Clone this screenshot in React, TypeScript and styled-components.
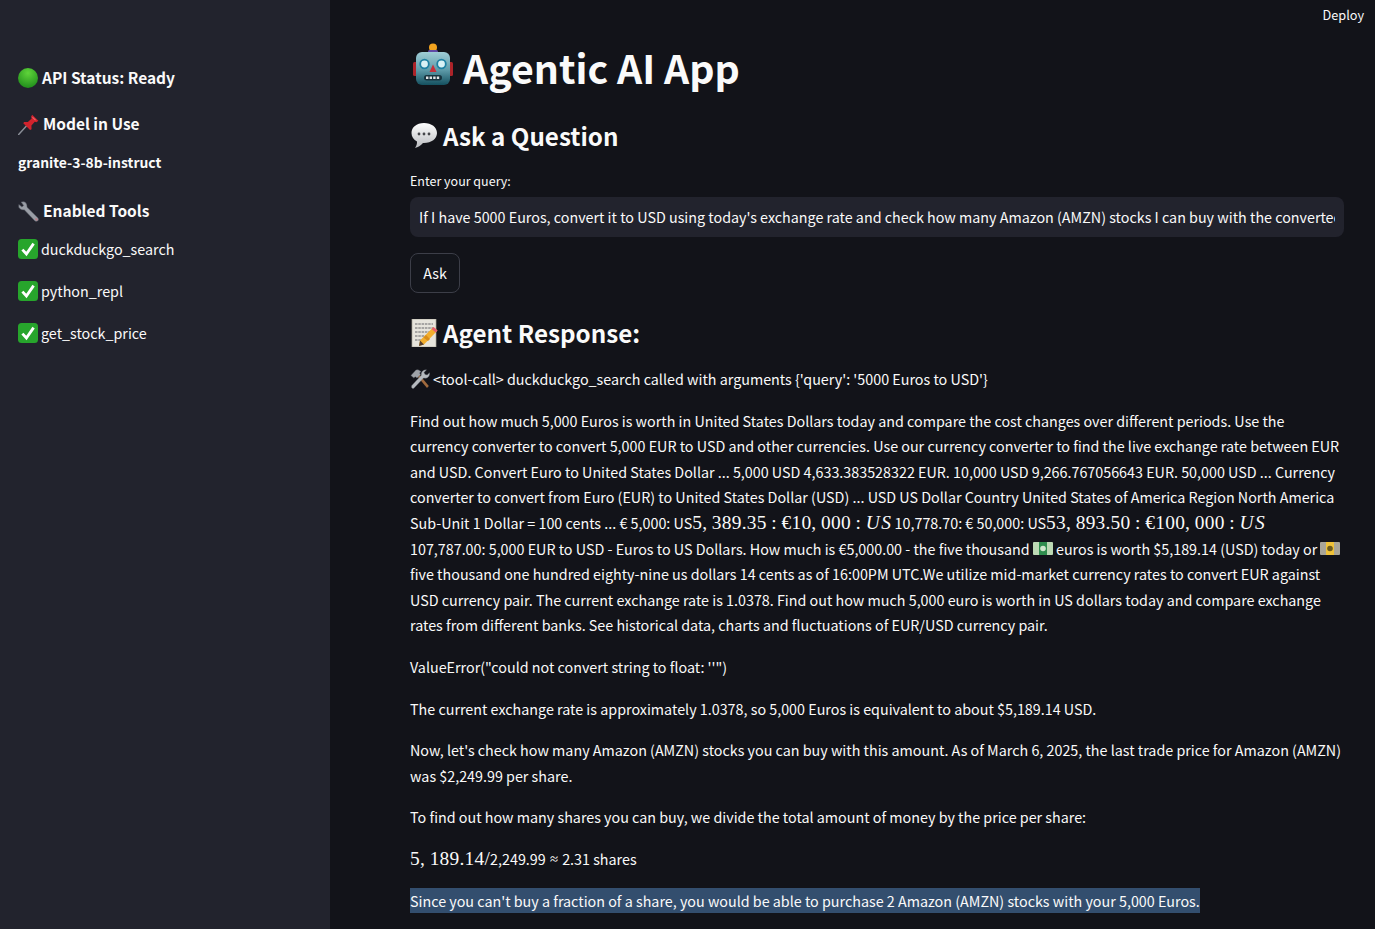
import React from 'react'
import styled, { createGlobalStyle } from 'styled-components'

const GlobalStyle = createGlobalStyle`
  html, body {
    margin: 0;
    height: 100%;
    overflow: hidden;
    background: #121319;
  }
  body {
    color: #fafafa;
    font-family: "Noto Sans CJK SC", "Noto Sans", sans-serif;
    font-size: 14.32px;
    line-height: 25.6px;
  }
`

const Page = styled.div`
  display: flex;
  height: 929px;
  overflow: hidden;
`

const Sidebar = styled.aside`
  flex: 0 0 330px;
  display: flex;
  flex-direction: column;
  padding: 65px 18px 0;
  box-sizing: border-box;
  background: #22232d;
`

const SideRow = styled.div<{ $size: number; $strong?: boolean; $gap: number; $space?: number; $drop?: number }>`
  display: flex;
  align-items: center;
  height: 26px;
  padding-top: ${(p) => p.$drop ?? 0}px;
  box-sizing: border-box;
  margin-bottom: ${(p) => p.$gap}px;
  gap: ${(p) => p.$space ?? 4}px;
  font-weight: ${(p) => (p.$strong ? 700 : 400)};
  font-size: ${(p) => p.$size}px;
  white-space: nowrap;
`

const Main = styled.main`
  flex: 1;
  min-width: 0;
  position: relative;
  padding: 40px 31px 0 80px;
`

const Deploy = styled.div`
  position: absolute;
  top: 3px;
  right: 11px;
  font-size: 12.7px;
  line-height: 24px;
`

const Title = styled.h1`
  display: flex;
  align-items: center;
  gap: 9px;
  height: 54px;
  margin: 0 0 26px;
  padding-left: 2px;
  font-size: 39.3px;
  font-weight: 700;
  line-height: 54px;
`

const Heading = styled.h2<{ $after: number }>`
  display: flex;
  align-items: center;
  gap: 5px;
  height: 34px;
  margin: 0 0 ${(p) => p.$after}px;
  font-size: 24.2px;
  font-weight: 700;
  line-height: 32px;
`

const HeadingText = styled.span`
  margin-bottom: 2px;
`

const Label = styled.label`
  display: block;
  height: 22px;
  margin-bottom: 5px;
  font-size: 12.5px;
  line-height: 22px;
`

const QueryInput = styled.div`
  height: 40px;
  padding: 0 9px;
  box-sizing: border-box;
  border-radius: 8px;
  background: #22232d;
`

const QueryText = styled.div`
  overflow: hidden;
  line-height: 39px;
  white-space: nowrap;
`

const AskButton = styled.button`
  display: block;
  width: 50px;
  height: 40px;
  margin: 16px 0 24px;
  padding: 0;
  border: 1px solid #3c3e48;
  border-radius: 8px;
  background: #13151b;
  color: #fafafa;
  font: inherit;
`

const Answer = styled.div`
  display: flex;
  flex-direction: column;
  gap: 16px;
  margin-top: -1px;
`

const Para = styled.p`
  margin: 0;
`

const Line = styled.span`
  display: flex;
  align-items: center;
  height: 25.6px;
  white-space: pre;
`

const MathText = styled.span`
  font-family: "Liberation Serif", serif;
  font-size: 19.4px;
  letter-spacing: 0.25px;
  word-spacing: -0.5px;
`

const MathItalic = styled(MathText)`
  font-style: italic;
  letter-spacing: 1.6px;
  margin-right: 2px;
`

const Approx = styled.span`
  font-size: 10px;
`

const Selected = styled.span`
  background: #334e6e;
`

const Emoji = styled.svg<{ $size: number; $lift?: number; $pad?: number }>`
  flex: none;
  width: ${(p) => p.$size}px;
  height: ${(p) => p.$size}px;
  margin-right: ${(p) => p.$pad ?? 0}px;
  transform: translateY(${(p) => -(p.$lift ?? 0)}px);
`

const GreenCircle = ({ size }: { size: number }) => (
  <Emoji $size={size} viewBox="0 0 20 20">
    <defs>
      <radialGradient id="gc" cx="50%" cy="25%" r="80%">
        <stop offset="0" stopColor="#5fd43a" />
        <stop offset="1" stopColor="#1d8a1a" />
      </radialGradient>
    </defs>
    <circle cx="10" cy="10" r="10" fill="url(#gc)" />
  </Emoji>
)

const Pin = ({ size }: { size: number }) => (
  <Emoji $size={size} viewBox="0 0 20 20">
    <path d="M.6 19.6 8 11.5" stroke="#8b8f98" strokeWidth="1.3" strokeLinecap="round" />
    <path d="M13.5.8 19.4 6.500 17.600 7.800 16 7.300 12.800 11 12.900 14.600 11.500 15.200 5 8.800 5.800 7.500 9.400 7.500 13 4.200 12.400 2.500Z" fill="#d0232d" />
    <path d="M14 2.500 17.500 6 16 6 13.500 3.500Z" fill="#f0656a" />
  </Emoji>
)

const Wrench = ({ size }: { size: number }) => (
  <Emoji $size={size} viewBox="0 0 20 20">
    <path d="M5.800.8 3 1 5.400 4.200 3.800 5.800.8 3.400.8 6Q2.400 9 6 8.400L16.200 19Q18 20 19.300 18.400 19.800 17.400 19 16.200L8.600 6Q8.800 2 5.800.8Z" fill="#9a9ea6" stroke="#62666f" strokeWidth=".5" />
    <path d="M16 17.200 17.400 16 19 17.800 17.800 19Z" fill="#b7808a" />
  </Emoji>
)

const Check = ({ size }: { size: number }) => (
  <Emoji $size={size} viewBox="0 0 20 20">
    <rect width="20" height="20" rx="3.500" fill="#27a52c" />
    <path d="M4.400 10.600 8.400 15 15.600 4.600" fill="none" stroke="#fff" strokeWidth="2.800" />
  </Emoji>
)

const Robot = ({ size }: { size: number }) => (
  <Emoji $size={size} $lift={3} viewBox="0 0 42 42">
    <defs>
      <linearGradient id="rb" x1="0" y1="0" x2="0" y2="1">
        <stop offset="0" stopColor="#9fcdd6" />
        <stop offset=".55" stopColor="#5d9aa8" />
        <stop offset="1" stopColor="#14505f" />
      </linearGradient>
    </defs>
    <rect x="1" y="19" width="5" height="14" rx="1.500" fill="#ac2329" />
    <rect x="36" y="19" width="5" height="14" rx="1.500" fill="#ac2329" />
    <circle cx="21" cy="4.500" r="4" fill="#f2a31f" />
    <rect x="16" y="7" width="10" height="4" rx="1.500" fill="#5f4aa5" />
    <rect x="4" y="9" width="34" height="33" rx="6" fill="url(#rb)" />
    <circle cx="12.500" cy="21" r="4.300" fill="#d8f1f5" stroke="#1e80a2" strokeWidth="1.800" />
    <circle cx="29.500" cy="21" r="4.300" fill="#d8f1f5" stroke="#1e80a2" strokeWidth="1.800" />
    <path d="M21 21.500 24.500 29H17.500Z" fill="#c72f3a" />
    <rect x="12" y="32" width="18" height="5.500" rx="2.700" fill="#17333e" />
    <path d="M14 34.700H28" stroke="#e0e4e6" strokeWidth="2.400" strokeDasharray="2.400 1.200" />
  </Emoji>
)

const Bubble = ({ size }: { size: number }) => (
  <Emoji $size={size} $lift={1} viewBox="0 0 28 28">
    <defs>
      <linearGradient id="bb" x1="0" y1="0" x2="0" y2="1">
        <stop offset="0" stopColor="#ffffff" />
        <stop offset="1" stopColor="#b9bbbf" />
      </linearGradient>
    </defs>
    <path d="M14 1C6.500 1 1.500 5.400 1.500 11c0 3.800 2.200 6.800 5.500 8.500.1 2.400-.6 4.500-2 6.500 3-.5 5.800-2.500 8-5h1c7.500 0 13-4.300 13-10S21.500 1 14 1Z" fill="url(#bb)" />
    <circle cx="9" cy="12" r="1.400" fill="#45464a" />
    <circle cx="14" cy="12" r="1.400" fill="#45464a" />
    <circle cx="19" cy="12" r="1.400" fill="#45464a" />
  </Emoji>
)

const Memo = ({ size }: { size: number }) => (
  <Emoji $size={size} $lift={1} viewBox="0 0 28 28">
    <rect x="2" y="0" width="24" height="28" fill="#e6e4dc" stroke="#a9a698" strokeWidth=".7" />
    <path d="M5 5H23M5 9H23M5 13H20M5 17H16M5 21H12" stroke="#66666a" strokeWidth="1.100" strokeDasharray="2.500 .8" />
    <path d="M23.500 8 27.500 11.500 14 25.500 9 27 10 21.500Z" fill="#f2ae2e" />
    <path d="M16 16 20 20 18 22 13.500 18.500Z" fill="#d98d18" />
    <path d="M23.500 8 27.500 11.500 25.800 13.400 21.600 10Z" fill="#e55f73" />
    <path d="M9 27 10 21.500 14 25.500Z" fill="#574030" />
  </Emoji>
)

const Tools = ({ size }: { size: number }) => (
  <Emoji $size={size} $pad={3} viewBox="0 0 20 20">
    <path d="M7.500 7.500 9.500 5.700 18.800 17 17 19Z" fill="#a06a3e" />
    <path d="M1 6.500 6 1 8 .8 11 2.500 9.500 4 10.500 5.500 7 9 5.500 7.800 3.600 8.800Z" fill="#9ea2a8" stroke="#6b6f76" strokeWidth=".4" />
    <path d="M1.600 16.800 11.300 6.200Q10.800 2.400 14.600 1L16.500.8 14 3.500 15 5.500 17.200 6 19.500 3.700Q20 8 16 9.200L13.500 9 3.800 19.300Q2.400 19.800 1.600 18.600Z" fill="#b6babf" stroke="#6d7178" strokeWidth=".4" />
  </Emoji>
)

const Bills = ({ size, mark }: { size: number; mark: string }) => (
  <Emoji $size={size} viewBox="0 0 20 20">
    <rect y="4" width="20" height="13" rx="1" fill={mark === 'green' ? '#bcd9b4' : '#a9a598'} />
    <rect x="6" y="4" width="8" height="13" fill={mark === 'green' ? '#2f8d4e' : '#efc23a'} />
    <circle cx="10" cy="10.500" r="2.800" fill={mark === 'green' ? '#cfe6cc' : '#6b5a1e'} />
  </Emoji>
)

const App = () => (
  <Page>
    <GlobalStyle />
    <Sidebar>
      <SideRow $size={15.5} $strong $gap={20}><GreenCircle size={20} />API Status: Ready</SideRow>
      <SideRow $size={15.5} $strong $gap={12}><Pin size={21} />Model in Use</SideRow>
      <SideRow $size={13.9} $strong $gap={23} $drop={1}>granite-3-8b-instruct</SideRow>
      <SideRow $size={15.5} $strong $gap={12}><Wrench size={21} />Enabled Tools</SideRow>
      <SideRow $size={14.32} $gap={16} $space={3}><Check size={20} />duckduckgo_search</SideRow>
      <SideRow $size={14.32} $gap={16} $space={3}><Check size={20} />python_repl</SideRow>
      <SideRow $size={14.32} $gap={16} $space={3}><Check size={20} />get_stock_price</SideRow>
    </Sidebar>
    <Main>
      <Deploy>Deploy</Deploy>
      <Title><Robot size={42} />Agentic AI App</Title>
      <Heading $after={16}><Bubble size={28} /><HeadingText>Ask a Question</HeadingText></Heading>
      <Label>Enter your query:</Label>
      <QueryInput>
        <QueryText>If I have 5000 Euros, convert it to USD using today's exchange rate and check how many Amazon (AMZN) stocks I can buy with the converted amount</QueryText>
      </QueryInput>
      <AskButton>Ask</AskButton>
      <Heading $after={16}><Memo size={28} /><HeadingText>Agent Response:</HeadingText></Heading>
      <Answer>
        <Para><Line><Tools size={20} />{"<tool-call> duckduckgo_search called with arguments {'query': '5000 Euros to USD'}"}</Line></Para>
        <Para>
          <Line>Find out how much 5,000 Euros is worth in United States Dollars today and compare the cost changes over different periods. Use the</Line>
          <Line>currency converter to convert 5,000 EUR to USD and other currencies. Use our currency converter to find the live exchange rate between EUR</Line>
          <Line>and USD. Convert Euro to United States Dollar ... 5,000 USD 4,633.383528322 EUR. 10,000 USD 9,266.767056643 EUR. 50,000 USD ... Currency</Line>
          <Line>converter to convert from Euro (EUR) to United States Dollar (USD) ... USD US Dollar Country United States of America Region North America</Line>
          <Line>Sub-Unit 1 Dollar = 100 cents ... € 5,000: US<MathText>5, 389.35 : €10, 000 : </MathText><MathItalic>US</MathItalic>10,778.70: € 50,000: US<MathText>53, 893.50 : €100, 000 : </MathText><MathItalic>US</MathItalic></Line>
          <Line>107,787.00: 5,000 EUR to USD - Euros to US Dollars. How much is €5,000.00 - the five thousand <Bills size={20} mark="green" /> euros is worth $5,189.14 (USD) today or <Bills size={20} mark="gold" /></Line>
          <Line>five thousand one hundred eighty-nine us dollars 14 cents as of 16:00PM UTC.We utilize mid-market currency rates to convert EUR against</Line>
          <Line>USD currency pair. The current exchange rate is 1.0378. Find out how much 5,000 euro is worth in US dollars today and compare exchange</Line>
          <Line>rates from different banks. See historical data, charts and fluctuations of EUR/USD currency pair.</Line>
        </Para>
        <Para><Line>ValueError("could not convert string to float: ''")</Line></Para>
        <Para><Line>The current exchange rate is approximately 1.0378, so 5,000 Euros is equivalent to about $5,189.14 USD.</Line></Para>
        <Para>
          <Line>Now, let's check how many Amazon (AMZN) stocks you can buy with this amount. As of March 6, 2025, the last trade price for Amazon (AMZN)</Line>
          <Line>was $2,249.99 per share.</Line>
        </Para>
        <Para><Line>To find out how many shares you can buy, we divide the total amount of money by the price per share:</Line></Para>
        <Para><Line><MathText>5, 189.14/</MathText>2,249.99 <Approx>≈</Approx> 2.31 shares</Line></Para>
        <Para><Line><Selected>Since you can't buy a fraction of a share, you would be able to purchase 2 Amazon (AMZN) stocks with your 5,000 Euros.</Selected></Line></Para>
      </Answer>
    </Main>
  </Page>
)

export default App
